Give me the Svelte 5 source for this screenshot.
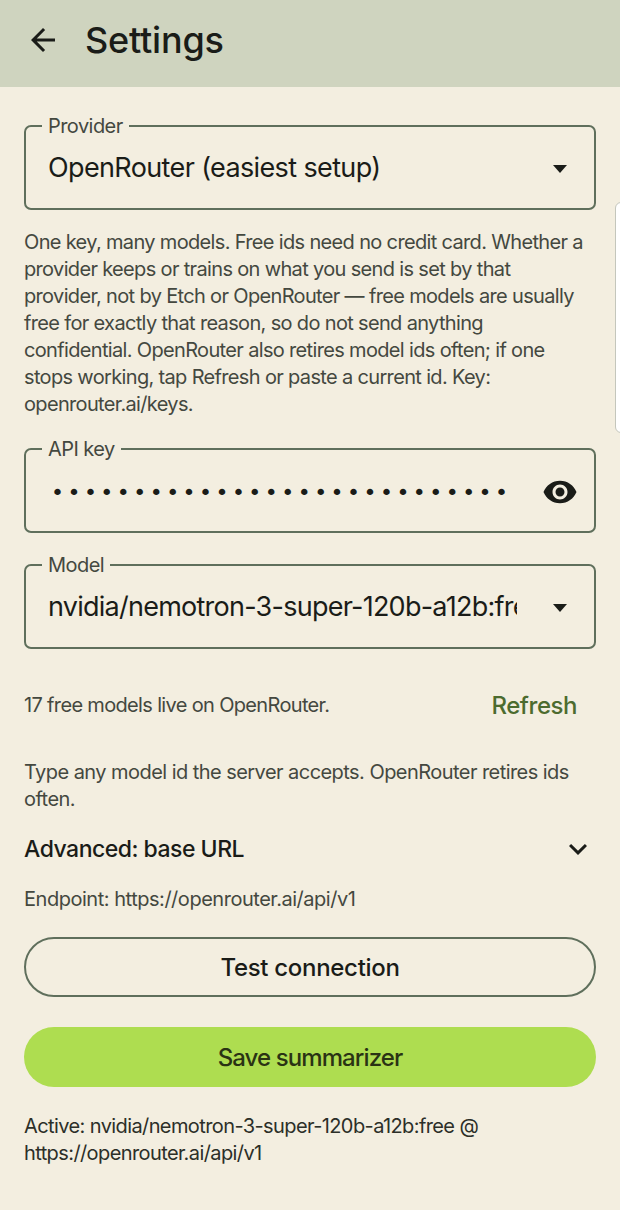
<script>
  const dots = '•'.repeat(28);
</script>

<div class="page">
  <header class="bar">
    <svg class="back" viewBox="0 0 24 24" width="36" height="36" aria-hidden="true">
      <path d="M20 11H7.83l5.59-5.59L12 4l-8 8 8 8 1.41-1.41L7.83 13H20v-2z" />
    </svg>
    <h1>Settings</h1>
  </header>

  <main class="content">
    <fieldset class="field">
      <legend>Provider</legend>
      <div class="row">
        <span class="value">OpenRouter (easiest setup)</span>
        <span class="caret"></span>
      </div>
    </fieldset>

    <p class="help intro">
      One key, many models. Free ids need no credit card. Whether a provider keeps or trains on what you send is set by that provider, not by Etch or OpenRouter — free models are usually free for exactly that reason, so do not send anything confidential. OpenRouter also retires model ids often; if one stops working, tap Refresh or paste a current id. Key: openrouter.ai/keys.
    </p>

    <fieldset class="field key">
      <legend>API key</legend>
      <div class="row">
        <span class="dots">{dots}</span>
        <svg class="eye" viewBox="0 0 24 24" width="36" height="36" aria-hidden="true">
          <path d="M12 4.5C7 4.5 2.73 7.61 1 12c1.73 4.39 6 7.5 11 7.5s9.27-3.11 11-7.5c-1.73-4.39-6-7.5-11-7.5zM12 17c-2.76 0-5-2.24-5-5s2.24-5 5-5 5 2.24 5 5-2.24 5-5 5zm0-8c-1.66 0-3 1.34-3 3s1.34 3 3 3 3-1.34 3-3-1.34-3-3-3z" />
        </svg>
      </div>
    </fieldset>

    <fieldset class="field model">
      <legend>Model</legend>
      <div class="row">
        <span class="value clip">nvidia/nemotron-3-super-120b-a12b:free</span>
        <span class="caret"></span>
      </div>
    </fieldset>

    <div class="live">
      <span>17 free models live on OpenRouter.</span>
      <span class="refresh">Refresh</span>
    </div>

    <p class="help any">Type any model id the server accepts. OpenRouter retires ids often.</p>

    <div class="advanced">
      <span>Advanced: base URL</span>
      <svg viewBox="0 0 24 24" width="36" height="36" aria-hidden="true">
        <path d="M16.59 8.59L12 13.17 7.41 8.59 6 10l6 6 6-6z" />
      </svg>
    </div>

    <p class="help endpoint">Endpoint: https://openrouter.ai/api/v1</p>

    <button class="btn outline">Test connection</button>
    <button class="btn filled">Save summarizer</button>

    <p class="active">Active: nvidia/nemotron-3-super-120b-a12b:free @ https://openrouter.ai/api/v1</p>
  </main>

  <div class="handle"></div>
</div>

<style>
  :global(body) {
    margin: 0;
    background: #fff;
  }
  .page {
    position: relative;
    width: 620px;
    height: 1210px;
    background: #f3eee0;
    font-family: Inter, "Noto Sans", sans-serif;
    color: #1a1c18;
    overflow: hidden;
  }
  .bar {
    height: 87px;
    background: #cfd4bf;
    display: flex;
    align-items: center;
    padding: 0 0 8px 25px;
    gap: 24px;
    box-sizing: border-box;
  }
  .back { fill: #1a1c18; flex: none; }
  h1 {
    margin: 0;
    font-size: 36px;
    font-weight: 500;
    letter-spacing: -0.2px;
  }
  .content {
    padding: 27px 24px 0;
    display: flex;
    flex-direction: column;
  }
  .field {
    margin: 0;
    padding: 0 22px;
    height: 96px;
    box-sizing: border-box;
    border: 2px solid #5f6f5c;
    border-radius: 7px;
    min-width: 0;
  }
  legend {
    margin-left: -6px;
    padding: 0 6px;
    font-size: 20px;
    line-height: 24px;
    color: #44483f;
    letter-spacing: -0.55px;
  }
  .row {
    display: flex;
    align-items: center;
    justify-content: space-between;
    height: 60px;
    margin-top: 1px;
  }
  .value {
    font-size: 27px;
    font-weight: 400;
    letter-spacing: -0.63px;
    white-space: nowrap;
    padding-bottom: 3px;
  }
  .clip {
    width: 469px;
    overflow: hidden;
    flex: none;
    letter-spacing: -0.75px;
  }
  .caret {
    width: 0;
    height: 0;
    margin-right: 5px;
    border-left: 7.5px solid transparent;
    border-right: 7.5px solid transparent;
    border-top: 8px solid #1a1c18;
    flex: none;
  }
  .help {
    margin: 19px 0 0;
    font-size: 20px;
    line-height: 27px;
    color: #44483f;
    letter-spacing: -0.66px;
  }
  .intro { padding-right: 8px; }
  .key { margin-top: 19px; }
  .model { margin-top: 20px; }
  .dots {
    font-family: "DejaVu Sans", sans-serif;
    font-size: 22px;
    letter-spacing: 3.47px;
    padding-left: 3px;
    white-space: nowrap;
  }
  .eye { fill: #1a1c18; flex: none; margin-right: -6px; }
  .live {
    display: flex;
    align-items: center;
    justify-content: space-between;
    height: 40px;
    margin-top: 36px;
    font-size: 20px;
    color: #44483f;
    letter-spacing: -0.66px;
    padding-right: 19px;
  }
  .refresh {
    font-size: 24px;
    font-weight: 500;
    color: #4c6b2f;
    letter-spacing: -0.45px;
  }
  .any { margin-top: 34px; letter-spacing: -0.55px; }
  .advanced {
    display: flex;
    align-items: center;
    justify-content: space-between;
    height: 36px;
    margin-top: 18px;
    font-size: 23px;
    font-weight: 500;
    letter-spacing: -0.5px;
  }
  .advanced svg { fill: #1a1c18; }
  .endpoint { margin-top: 19px; letter-spacing: -0.47px; }
  .btn {
    display: block;
    width: 100%;
    height: 60px;
    border-radius: 30px;
    font-family: inherit;
    font-size: 24px;
    font-weight: 500;
    letter-spacing: -0.3px;
    box-sizing: border-box;
  }
  .outline {
    margin-top: 24px;
    background: transparent;
    border: 2px solid #5f6f5c;
    color: #1a1c18;
  }
  .filled {
    margin-top: 30px;
    background: #aedd50;
    border: 0;
    color: #2a3314;
    letter-spacing: -0.9px;
  }
  .active {
    margin: 26px 0 0;
    font-size: 20px;
    line-height: 27px;
    letter-spacing: -0.6px;
    color: #2c2f28;
  }
  .handle {
    position: absolute;
    left: 615px;
    top: 202px;
    width: 12px;
    height: 231px;
    background: #fff;
    border: 1px solid #c4c6bc;
    border-radius: 6px;
    box-sizing: border-box;
  }
</style>
